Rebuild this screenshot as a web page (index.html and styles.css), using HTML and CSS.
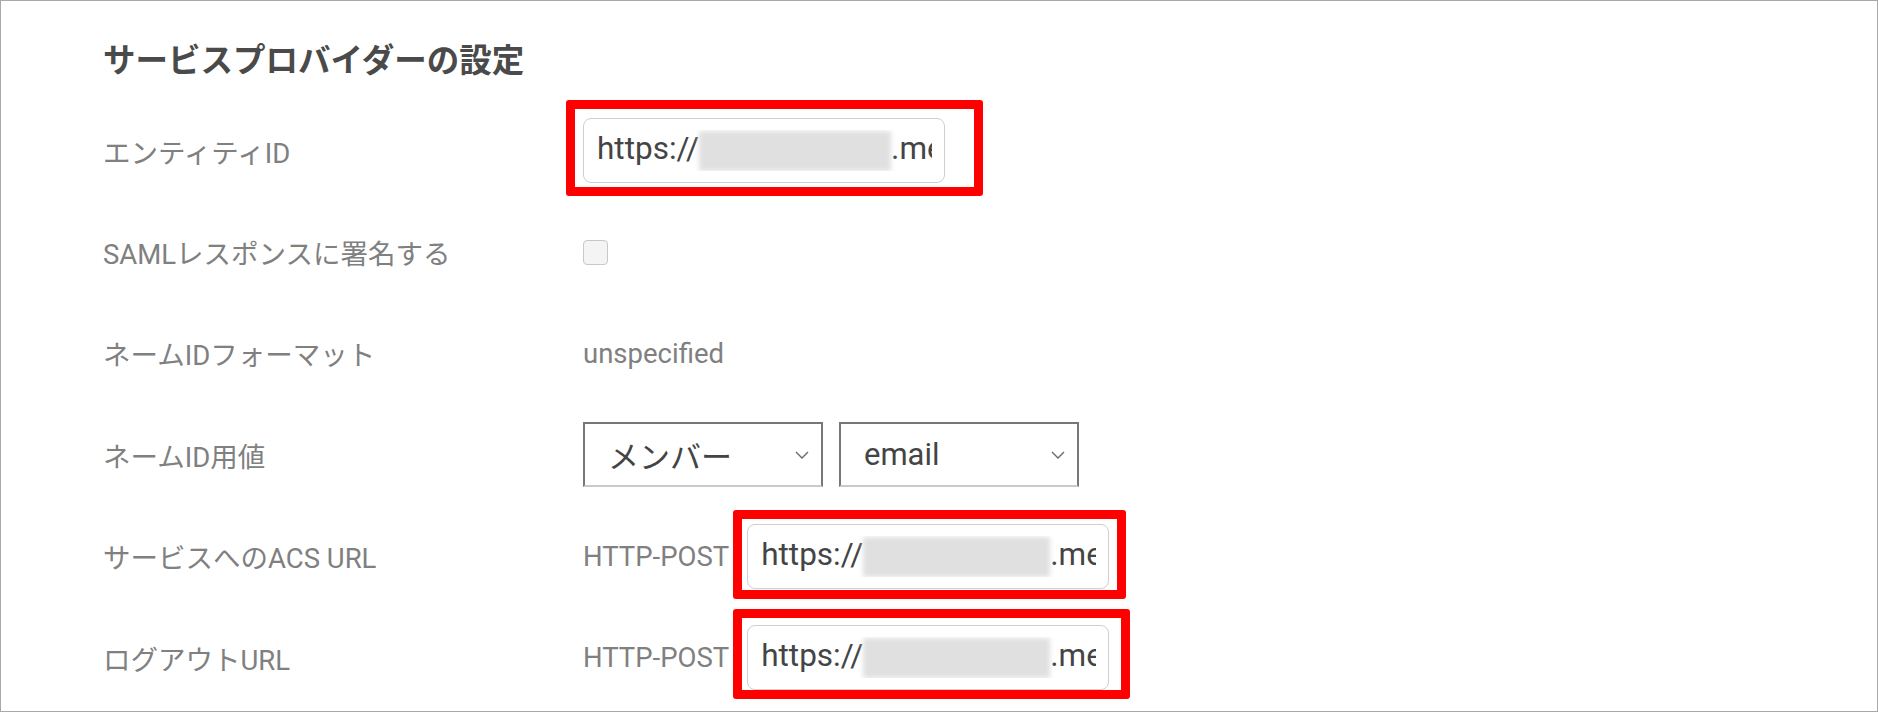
FILE: index.html
```html
<!DOCTYPE html>
<html lang="ja">

<head>
    <meta charset="UTF-8">
    <meta name="viewport" content="width=device-width, initial-scale=1.0">
    <title>サービスプロバイダーの設定</title>
    <link rel="stylesheet" href="styles.css">
</head>

<body>
    <div class="panel">
        <h2 class="title">サービスプロバイダーの設定</h2>

        <div class="row">
            <div class="label">エンティティID</div>
            <div class="value">
                <span class="mark mark-entity">
                    <span class="field"><span class="field-text">https://<span class="blur"></span>.me/saml/metadata</span></span>
                </span>
            </div>
        </div>

        <div class="row">
            <div class="label">SAMLレスポンスに署名する</div>
            <div class="value">
                <input type="checkbox" class="check">
            </div>
        </div>

        <div class="row">
            <div class="label">ネームIDフォーマット</div>
            <div class="value text">unspecified</div>
        </div>

        <div class="row">
            <div class="label">ネームID用値</div>
            <div class="value">
                <div class="select select-first">
                    <span>メンバー</span>
                    <svg width="14" height="8" viewBox="0 0 14 8"><path d="M1 1 L7 7 L13 1" fill="none" stroke="#666" stroke-width="1.3"/></svg>
                </div>
                <div class="select">
                    <span>email</span>
                    <svg width="14" height="8" viewBox="0 0 14 8"><path d="M1 1 L7 7 L13 1" fill="none" stroke="#666" stroke-width="1.3"/></svg>
                </div>
            </div>
        </div>

        <div class="row">
            <div class="label">サービスへのACS URL</div>
            <div class="value">
                <span class="text">HTTP-POST</span>
                <span class="mark mark-acs">
                    <span class="field"><span class="field-text">https://<span class="blur blur-short"></span>.me/saml/acs</span></span>
                </span>
            </div>
        </div>

        <div class="row">
            <div class="label">ログアウトURL</div>
            <div class="value">
                <span class="text">HTTP-POST</span>
                <span class="mark mark-logout">
                    <span class="field"><span class="field-text">https://<span class="blur blur-short"></span>.me/saml/logout</span></span>
                </span>
            </div>
        </div>
    </div>
</body>

</html>
```

FILE: styles.css
```css
body {
    margin: 0;
    font-family: Roboto, "Noto Sans CJK JP", sans-serif;
    background-color: #fff;
}

.panel {
    box-sizing: border-box;
    height: 712px;
    border: 1px solid #a9a9a9;
    padding: 36px 0 0 102px;
    overflow: hidden;
}

.title {
    margin: 0 0 15px;
    font-size: 32.5px;
    line-height: 48px;
    font-weight: bold;
    color: #4a4a4a;
}

.row {
    display: grid;
    grid-template-columns: 480px auto;
    align-items: center;
    height: 101.4px;
}

.label,
.text {
    font-size: 27.5px;
    color: #808080;
}

.value {
    display: flex;
    align-items: center;
}

/* text input look-alike, the middle part is blurred out */
.field {
    box-sizing: border-box;
    display: flex;
    align-items: center;
    width: 362px;
    height: 65px;
    padding: 0 12px 0 13px;
    border: 1.5px solid #cfcfcf;
    border-radius: 8px;
    background-color: #fff;
}

.field-text {
    overflow: hidden;
    white-space: nowrap;
    font-size: 31.5px;
    color: #444;
}

.blur {
    display: inline-block;
    width: 192px;
    height: 40px;
    vertical-align: middle;
    background-color: #e0e0e0;
    filter: blur(2.5px);
}

.blur-short {
    width: 187px;
}

/* red annotation boxes drawn over the fields */
.mark {
    position: relative;
    display: inline-block;
}

.mark::after {
    content: "";
    position: absolute;
    border: 9px solid #ff0000;
    border-radius: 3px;
    pointer-events: none;
}

.mark-entity::after {
    top: -18px;
    right: -38px;
    bottom: -13px;
    left: -17px;
}

.mark-acs {
    margin-left: 18px;
}

.mark-acs::after {
    top: -14px;
    right: -17px;
    bottom: -10px;
    left: -14px;
}

.mark-logout {
    margin-left: 18px;
}

.mark-logout::after {
    top: -16px;
    right: -21px;
    bottom: -9px;
    left: -14px;
}

.check {
    appearance: none;
    box-sizing: border-box;
    width: 25px;
    height: 25px;
    margin: 0;
    border: 1.5px solid #c8c8c8;
    border-radius: 4px;
    background-color: #f4f4f4;
}

.select {
    box-sizing: border-box;
    display: flex;
    align-items: center;
    justify-content: space-between;
    width: 240px;
    height: 65px;
    padding: 0 12px 0 23px;
    border: 2px solid #777;
    border-bottom-color: #cacaca;
    font-size: 31px;
    color: #444;
}

.select-first {
    margin-right: 16px;
}
```
